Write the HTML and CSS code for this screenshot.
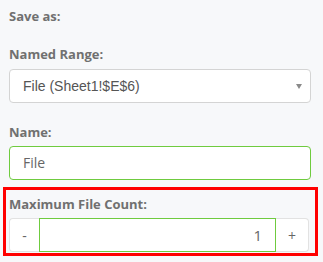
FILE: index.html
```html
<!DOCTYPE html>
<html>
<head>
<meta charset="utf-8">
<link rel="stylesheet" href="styles.css">
</head>
<body>
<div class="panel">
  <div class="label first">Save as:</div>
  <div class="label">Named Range:</div>
  <div class="select">
    <span class="select-text">File (Sheet1!$E$6)</span>
    <span class="caret"></span>
  </div>
  <div class="label name-label">Name:</div>
  <div class="input">File</div>
  <div class="highlight">
    <div class="label count-label">Maximum File Count:</div>
    <div class="spinner">
      <div class="btn minus">-</div>
      <div class="num">1</div>
      <div class="btn plus">+</div>
    </div>
  </div>
</div>
</body>
</html>
```

FILE: styles.css
```css
html, body {
  margin: 0;
  padding: 0;
  background: #f7f8fa;
}
body {
  width: 323px;
  height: 262px;
  overflow: hidden;
  font-family: "Open Sans", "Liberation Sans", sans-serif;
}
.panel {
  padding: 7px 12px 0 9px;
}
.label {
  font-size: 13px;
  line-height: 19px;
  font-weight: 700;
  color: #707070;
  margin-top: 19px;
}
.label.first {
  margin-top: 0;
}
.select {
  margin-top: 5px;
  height: 34px;
  box-sizing: border-box;
  border: 1px solid #d4d4d4;
  border-radius: 4px;
  background: #fff;
  display: flex;
  align-items: center;
  justify-content: space-between;
  padding: 0 8px 0 13px;
}
.select-text {
  font-family: "Liberation Sans", Arial, sans-serif;
  font-size: 14px;
  color: #555;
}
.caret {
  width: 0;
  height: 0;
  border-left: 3.5px solid transparent;
  border-right: 3.5px solid transparent;
  border-top: 5px solid #8a8a8a;
  margin-top: 1px;
}
.label.name-label {
  margin-top: 20px;
}
.input {
  margin-top: 4px;
  height: 34px;
  box-sizing: border-box;
  border: 1px solid #6fcb3f;
  border-radius: 4px;
  background: #fff;
  font-size: 14px;
  color: #666;
  line-height: 32px;
  padding: 0 13px;
}
.highlight {
  margin: 7px -7px 0 -6px;
  border: 3px solid #ff0000;
  padding: 5px 6px 1px 3px;
}
.label.count-label {
  margin-top: 0;
}
.spinner {
  margin-top: 4px;
  height: 34px;
  display: flex;
}
.btn {
  width: 30px;
  box-sizing: border-box;
  border: 1px solid #e2e2e2;
  background: #fff;
  color: #666;
  font-size: 14px;
  display: flex;
  align-items: center;
  justify-content: center;
}
.btn.minus {
  border-radius: 4px 0 0 4px;
  border-right: none;
}
.btn.plus {
  width: 33px;
  border-radius: 0 4px 4px 0;
  border-left: none;
}
.num {
  flex: 1;
  box-sizing: border-box;
  border: 1px solid #6fcb3f;
  background: #fff;
  font-size: 15px;
  color: #666;
  text-align: right;
  line-height: 32px;
  padding-right: 13px;
}
```
